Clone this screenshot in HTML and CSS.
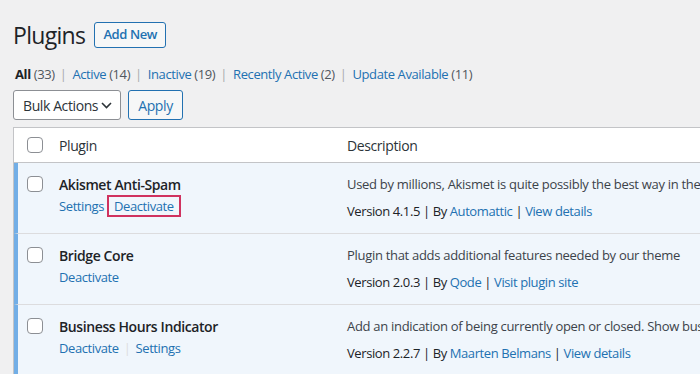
FILE: index.html
```html
<!DOCTYPE html>
<html>
<head>
<meta charset="utf-8">
<title>Plugins</title>
<link rel="stylesheet" href="styles.css">
</head>
<body>
<div class="wrap">
    <div class="page-head">
        <h1>Plugins</h1>
        <a class="btn add-new" href="#">Add New</a>
    </div>

    <ul class="filters">
        <li><b>All</b> <span class="count">(33)</span></li>
        <li><a href="#">Active <span class="count">(14)</span></a></li>
        <li><a href="#">Inactive <span class="count">(19)</span></a></li>
        <li><a href="#">Recently Active <span class="count">(2)</span></a></li>
        <li><a href="#">Update Available <span class="count">(11)</span></a></li>
    </ul>

    <div class="tablenav">
        <div class="select">
            <span>Bulk Actions</span>
            <svg width="11" height="7" viewBox="0 0 11 7"><path d="M1 1l4.5 4.5L10 1" fill="none" stroke="#2c3338" stroke-width="1.6"/></svg>
        </div>
        <a class="btn apply" href="#">Apply</a>
    </div>

    <table class="plugins">
        <colgroup>
            <col class="c-check">
            <col class="c-name">
            <col>
        </colgroup>
        <thead>
            <tr>
                <td class="check"><span class="cb"></span></td>
                <th>Plugin</th>
                <th>Description</th>
            </tr>
        </thead>
        <tbody>
            <tr class="active">
                <td class="check"><span class="cb"></span></td>
                <td class="name">
                    <strong>Akismet Anti-Spam</strong>
                    <div class="actions"><a href="#">Settings</a> <a class="mark" href="#">Deactivate</a></div>
                </td>
                <td class="desc">
                    <p>Used by millions, Akismet is quite possibly the best way in the world to protect your blog from spam.</p>
                    <div class="meta">Version 4.1.5 | By <a href="#">Automattic</a> | <a href="#">View details</a></div>
                </td>
            </tr>
            <tr class="active">
                <td class="check"><span class="cb"></span></td>
                <td class="name">
                    <strong>Bridge Core</strong>
                    <div class="actions"><a href="#">Deactivate</a></div>
                </td>
                <td class="desc">
                    <p>Plugin that adds additional features needed by our theme</p>
                    <div class="meta">Version 2.0.3 | By <a href="#">Qode</a> | <a href="#">Visit plugin site</a></div>
                </td>
            </tr>
            <tr class="active">
                <td class="check"><span class="cb"></span></td>
                <td class="name">
                    <strong>Business Hours Indicator</strong>
                    <div class="actions"><a href="#">Deactivate</a><span class="sep">|</span><a href="#">Settings</a></div>
                </td>
                <td class="desc">
                    <p>Add an indication of being currently open or closed. Show business hours in a table.</p>
                    <div class="meta">Version 2.2.7 | By <a href="#">Maarten Belmans</a> | <a href="#">View details</a></div>
                </td>
            </tr>
        </tbody>
    </table>
</div>
</body>
</html>
```

FILE: styles.css
```css
body,h1,p,ul,li{margin:0;padding:0;}
ul{list-style-type:none;}
a{color:#2271b1;text-decoration:none;}
html,body{overflow:hidden;}
body{background:#f0f0f1;color:#3c434a;font:13px/1.5 "Open Sans","Noto Sans",sans-serif;letter-spacing:-0.4px;}

.wrap{padding:22px 0 0 13px;width:820px;}

.page-head{display:flex;align-items:center;gap:9px;height:26px;}
.page-head h1{font-size:23px;font-weight:400;color:#1d2327;line-height:26px;letter-spacing:-0.7px;}

.btn{display:flex;align-items:center;justify-content:center;box-sizing:border-box;border:1px solid #2271b1;border-radius:3px;background:#f6f7f7;color:#2271b1;}
.add-new{width:72px;height:26px;font-weight:600;font-size:13px;}

.filters{display:flex;margin:16px 0 0 2px;height:22px;align-items:center;}
.filters li{white-space:nowrap;}
.filters li+li:before{content:"|";color:#a7aaad;margin:0 6px 0 5px;}
.filters b{color:#1d2327;}
.filters .count{color:#50575e;}

.tablenav{display:flex;gap:7px;margin-top:4px;}
.select{display:flex;align-items:center;justify-content:space-between;box-sizing:border-box;width:108px;height:30px;padding:0 8px 0 9px;background:#fff;border:1px solid #8c8f94;border-radius:3px;color:#2c3338;font-size:14px;white-space:nowrap;}
.apply{width:55px;height:30px;font-size:14px;}

.plugins{margin-top:7px;border:1px solid #c3c4c7;border-collapse:separate;border-spacing:0;table-layout:fixed;width:820px;background:#fff;}
.c-check{width:35px;}
.c-name{width:288px;}
.plugins th,.plugins td{text-align:left;vertical-align:top;padding:0 10px;}
.plugins thead td,.plugins thead th{height:34px;vertical-align:middle;border-bottom:1px solid #c3c4c7;font-weight:400;font-size:14px;color:#2c3338;}
.plugins thead .check{padding:0 0 0 13px;}

.cb{display:block;box-sizing:border-box;width:16px;height:16px;border:1px solid #8c8f94;border-radius:4px;background:#fff;}

.plugins tbody td{height:71px;box-sizing:border-box;border-bottom:1px solid #dcdcde;padding-top:11px;}
.plugins tbody .check{padding:13px 0 0 9px;}
.plugins tr.active td{background:#f0f6fc;}
.plugins tr.active .check{border-left:4px solid #72aee6;}

.name strong{display:block;font-size:14px;font-weight:600;color:#1d2327;line-height:21px;}
.actions{margin-top:1px;line-height:20px;}
.actions .mark{display:inline-block;outline:2px solid #d0325f;padding:0 5px;margin-left:2px;line-height:18px;}
.actions .sep{color:#dcdcde;margin:0 5px;}

.desc p{white-space:nowrap;line-height:21px;color:#3c434a;letter-spacing:-0.3px;}
.desc .meta{margin-top:6px;line-height:20px;color:#1d2327;}
```
